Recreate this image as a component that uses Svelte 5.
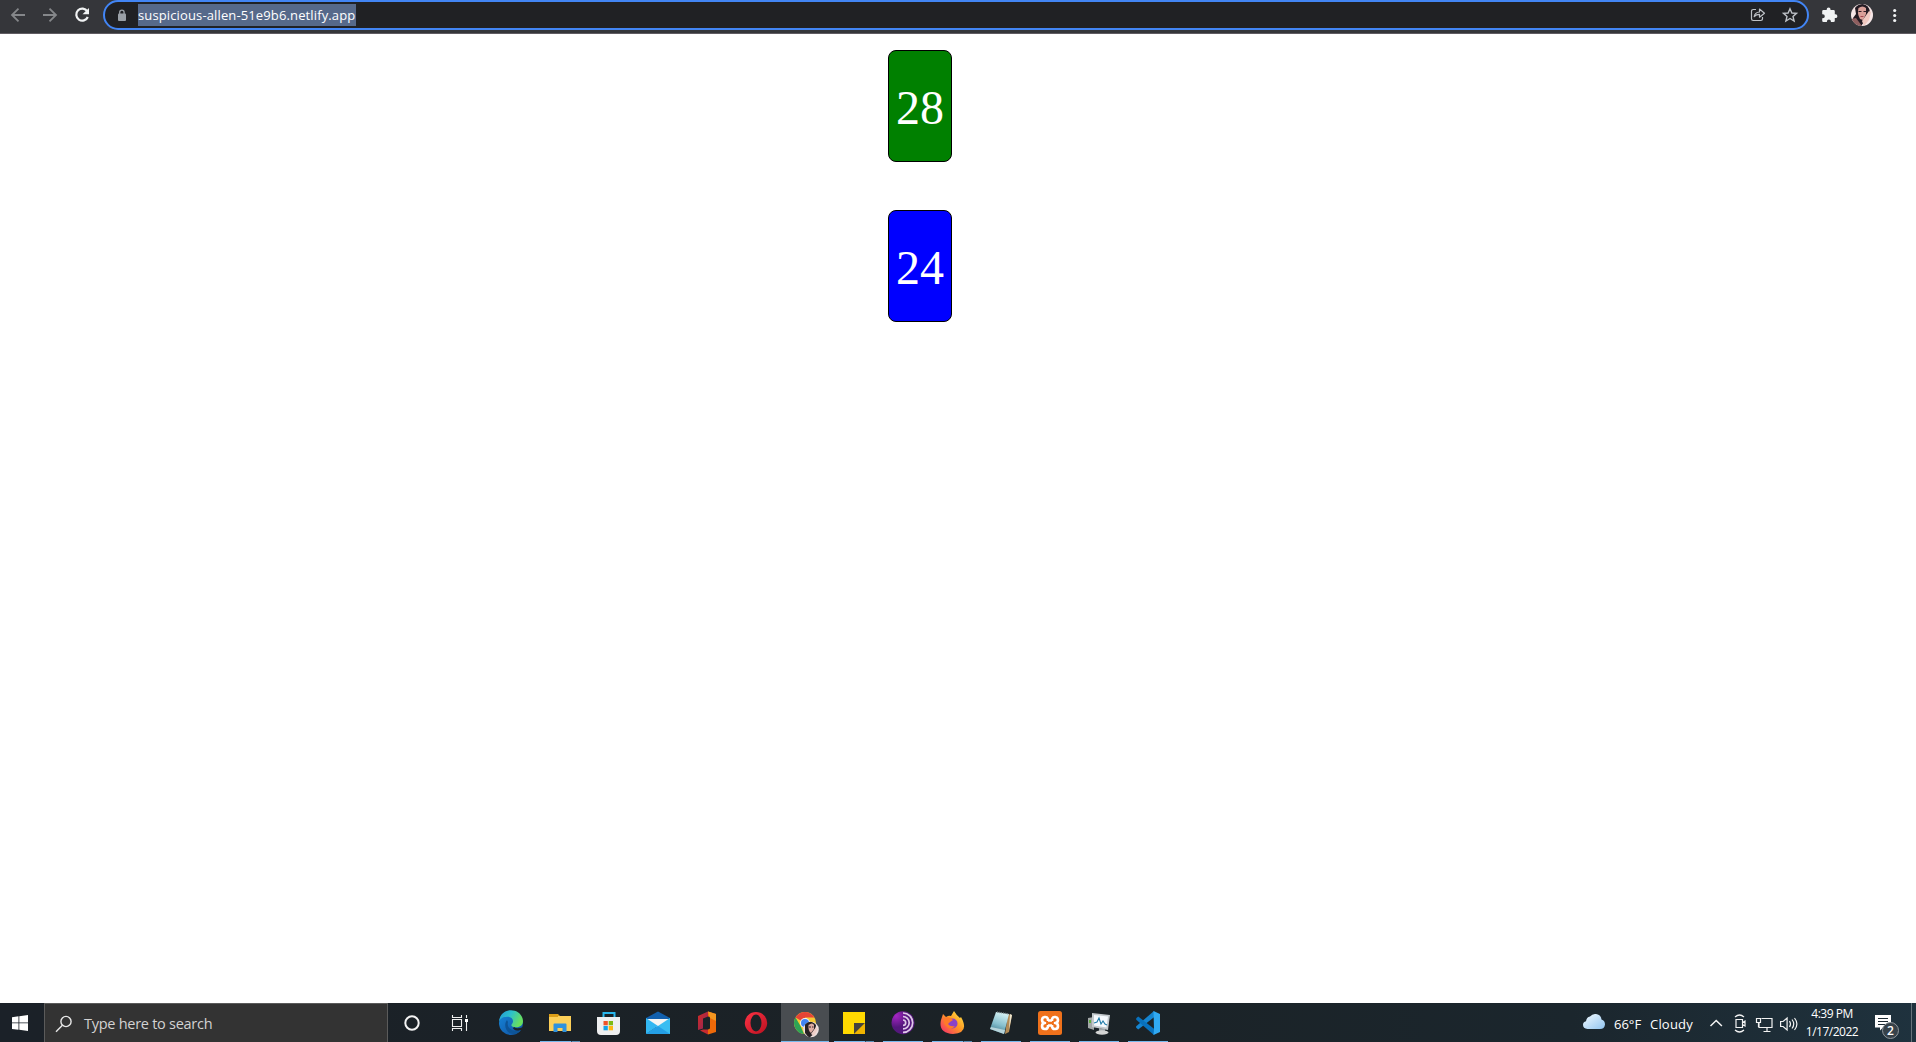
<script>
  const cards = [
    { value: 28, tone: 'green' },
    { value: 24, tone: 'blue' },
  ];
  const apps = [
    { name: 'edge' },
    { name: 'explorer', open: true, stacked: true },
    { name: 'store' },
    { name: 'mail' },
    { name: 'office' },
    { name: 'opera' },
    { name: 'chrome', open: true, active: true },
    { name: 'notes', open: true, stacked: true },
    { name: 'tor', open: true },
    { name: 'firefox', open: true, stacked: true },
    { name: 'notepad', open: true },
    { name: 'xampp', open: true },
    { name: 'monitor', open: true },
    { name: 'code', open: true },
  ];
</script>

<div class="screen">
  <header class="toolbar">
    <svg class="nav" width="103" height="33" viewBox="0 0 103 33" fill="none">
      <g stroke="#85878a" stroke-width="1.8">
        <path d="M25 15H12.5M18.5 8.6L12 15l6.500 6.400" />
        <path d="M43 15h12.500M49.500 8.600L56 15l-6.500 6.400" />
      </g>
      <path d="M87.300 11.300A6 6 0 1 0 87.800 17" stroke="#f1f3f4" stroke-width="2.200" />
      <path d="M89 8v6.300h-6.500z" fill="#f1f3f4" />
    </svg>
    <div class="omnibox">
      <svg class="lock" width="10" height="13" viewBox="0 0 10 13">
        <path d="M2.700 5V3.300a2.200 2.200 0 0 1 4.400 0V5" fill="none" stroke="#9aa0a6" stroke-width="1.300" />
        <rect x="1" y="4.500" width="8" height="7.500" rx="1" fill="#9aa0a6" />
      </svg>
      <span class="url">suspicious-allen-51e9b6.netlify.app</span>
      <svg class="page-actions" width="58" height="26" viewBox="0 0 58 26" fill="none" stroke="#bdc1c6" stroke-width="1.200">
        <path d="M8 7.500H5.200a1.700 1.700 0 0 0-1.700 1.700v7.600a1.700 1.700 0 0 0 1.700 1.700h7.600a1.700 1.700 0 0 0 1.700-1.700V15" />
        <path d="M6.200 14.500c.5-3 2.300-4.300 5.300-4.500V7l5 4.200-5 4v-2.800c-2.300 0-3.800.5-5.300 2.100z" stroke-linejoin="round" />
        <path d="M42 6.700l1.900 4.300 4.600.4-3.500 3 1.100 4.600-4.100-2.500-4.100 2.500 1.100-4.600-3.500-3 4.600-.4z" stroke-width="1.400" />
      </svg>
    </div>
    <svg class="extras" width="107" height="33" viewBox="0 0 107 33">
      <path
        d="M14.500 10h3.200V9.300a1.900 1.900 0 0 1 3.800 0V10h3a1.300 1.300 0 0 1 1.300 1.300v3h.7a1.900 1.900 0 0 1 0 3.800h-.7v2.700a1.300 1.300 0 0 1-1.300 1.300h-2.600v-.7a2 2 0 0 0-4 0v.7h-3.400a1.300 1.300 0 0 1-1.300-1.300v-2.600h.6a2 2 0 0 0 0-4h-.6v-2.900a1.300 1.300 0 0 1 1.300-1.300z"
        fill="#f1f3f4"
      />
      <clipPath id="face"><circle cx="53" cy="15" r="11" /></clipPath>
      <g clip-path="url(#face)">
        <path d="M42 4h22v22H42z" fill="#f6e6e6" />
        <path d="M46 8q3-4 8-4 6 1 7 8l-2 5-7 9q-8-2-8-8l3-4z" fill="#231a22" />
        <path d="M49.500 8q4-3 7.500 0v6l-3 6-3-1q-3-5-1.500-11z" fill="#d99f98" />
        <path d="M49.500 11.500h3M54.500 11.500h2.500" stroke="#302026" stroke-width="1.200" />
        <path d="M51.500 16.500h3" stroke="#a4454e" />
        <path d="M53 21l7-10 2 1-2 8-5 6z" fill="#f0c8c0" />
        <path d="M42 19l5-1 6 8h-9z" fill="#8f5f5f" />
      </g>
      <g fill="#f1f3f4"><circle cx="85.700" cy="10.500" r="1.600" /><circle cx="85.700" cy="15.500" r="1.600" /><circle cx="85.700" cy="20.500" r="1.600" /></g>
    </svg>
  </header>

  <main>
    {#each cards as card}
      <div class="card {card.tone}">{card.value}</div>
    {/each}
  </main>

  <footer class="taskbar">
    <svg class="start" width="44" height="39" viewBox="0 0 44 39" fill="#fff">
      <path d="M12 14.200l6.500-.9v6.200H12zM19.300 13.200L28 12v7.500h-8.700zM12 20.300h6.500v6.500l-6.500-.9zM19.300 20.300H28V28l-8.700-1.200z" />
    </svg>
    <div class="search">
      <svg width="18" height="18" viewBox="0 0 18 18" fill="none" stroke="#e8e8e8" stroke-width="1.400">
        <circle cx="11" cy="6.500" r="5.100" /><path d="M7.400 10.300L1 16.700" />
      </svg>
      <span>Type here to search</span>
    </div>
    <svg class="task" width="48" height="39" viewBox="0 0 48 39" fill="none"><circle cx="24" cy="20" r="6.700" stroke="#f4f4f4" stroke-width="2" /></svg>
    <svg class="task" width="48" height="39" viewBox="0 0 48 39" fill="none" stroke="#eee" stroke-width="1.100">
      <path d="M16.500 16.500h9v7h-9zM16.500 12v2.500h9V12M16.500 28v-2.500h9V28M30.500 12v3M30.500 19v9" />
      <path d="M29 16h3v3h-3z" fill="#fff" stroke="none" />
    </svg>

    <div class="apps">
      {#each apps as app}
        <div class="app" class:open={app.open} class:active={app.active} class:stacked={app.stacked}>
          <svg width="48" height="39" viewBox="0 0 48 39">
            {#if app.name === 'edge'}
              <linearGradient id="edgeTop" x1="0" x2="1" y2=".4"><stop stop-color="#2396d8" /><stop offset=".5" stop-color="#2cc0cb" /><stop offset="1" stop-color="#68df5d" /></linearGradient>
              <linearGradient id="edgeBase" x2="1" y2="1"><stop stop-color="#1688dc" /><stop offset="1" stop-color="#104e9d" /></linearGradient>
              <circle cx="24" cy="20" r="12" fill="url(#edgeBase)" />
              <path d="M12 19C13 3 35 4 36 18c0 5-4 7-9 6-3-.5-3-2-2-3 3-4-1-8-6-7-4 0-6 2-7 5z" fill="url(#edgeTop)" />
              <path d="M27 24q3 2.500 9 0l.5 1.500-2 1.700q-6 1.500-8.500-1.700z" fill="#1b242a" />
              <path d="M20 17c-4 5-1 14 7 14 3 0 6-2 7-4-6 3-15-1-13-8z" fill="#0d5497" />
            {:else if app.name === 'explorer'}
              <path d="M13 11h9l2 2h-11z" fill="#d89a13" /><path d="M13 13h22v15H13z" fill="#fccf58" />
              <path d="M13 11h9v3h-9z" fill="#dc9e18" /><path d="M17.500 29v-7.500q0-1 1-1h11q1 0 1 1V29h-4v-4h-5v4z" fill="#2f92dd" />
            {:else if app.name === 'store'}
              <path d="M18.500 15V10h11v5" fill="none" stroke="#29b7ed" stroke-width="2" />
              <path d="M12 14h23v14q0 4-4 4H16q-4 0-4-4z" fill="#eeeff0" />
              <path d="M18.500 18h4.300v4.300h-4.300z" fill="#ef5329" /><path d="M23.700 18H28v4.300h-4.300z" fill="#7dba14" /><path d="M18.500 23h4.300v4.300h-4.300z" fill="#12a2e8" /><path d="M23.700 23H28v4.300h-4.300z" fill="#fdb714" />
            {:else if app.name === 'mail'}
              <path d="M12 15l12-6.500L36 15v7H12z" fill="#1260ad" /><path d="M13 16h22v8H13z" fill="#f5f5f4" />
              <path d="M12 15l12 8-12 8z" fill="#32b7f2" /><path d="M36 15v16H12l12-8z" fill="#39bdf2" /><path d="M24 23l12 8H12z" fill="#249fe6" />
            {:else if app.name === 'office'}
              <linearGradient id="officeRed" y2="1"><stop stop-color="#d22b22" /><stop offset="1" stop-color="#8d245e" /></linearGradient>
              <path d="M15 13l10-4.500v5l-5 2v10l-5 1.500z" fill="url(#officeRed)" />
              <path d="M25 8.500l8 2.500v18l-8 2.500v-5l2-1V14l-2-.5z" fill="#ee6909" /><path d="M25 26.500v5l-8-4 3-1z" fill="#c72b30" /><path d="M25 8.500l8 2.500v7l-6-3z" fill="#f49620" />
            {:else if app.name === 'opera'}
              <linearGradient id="operaRed" x2="1" y2="1"><stop stop-color="#ff3345" /><stop offset="1" stop-color="#b8101f" /></linearGradient>
              <path d="M24 9a11.200 11 0 1 0 0 22 11.200 11 0 1 0 0-22zm0 2.500a5.500 8.500 0 1 1 0 17 5.500 8.500 0 1 1 0-17z" fill="url(#operaRed)" />
            {:else if app.name === 'chrome'}
              <circle cx="24" cy="20" r="11" fill="#f6c934" /><path d="M24 20L14.500 14.500A11 11 0 0 1 33.500 14.500H24z" fill="#e54436" />
              <path d="M14.500 14.500L19.500 23l3.500 8A11 11 0 0 1 14.500 14.500z" fill="#2da455" /><circle cx="24" cy="20" r="5" fill="#f7f7f7" /><circle cx="24" cy="20" r="4" fill="#4285f4" />
              <clipPath id="miniFace"><circle cx="30" cy="26.500" r="7.800" /></clipPath>
              <g clip-path="url(#miniFace)"><path d="M22 18h16v17H22z" fill="#eee0df" /><path d="M24 20q6-4 11 2l-1 8-6 5-4-5z" fill="#282124" /><path d="M27.500 22q4-3 5.500 0v4l-3 4q-3-2-2.500-8z" fill="#dfaca3" /><path d="M28 24h2M31 24h1.500" stroke="#3a2527" /><path d="M30 31l5-7 2 2-4 7z" fill="#f0cfc9" /></g>
            {:else if app.name === 'notes'}
              <path d="M13 9h22v11L24 31H13z" fill="#ffd900" /><path d="M24 31V20h11z" fill="#45433d" /><path d="M35 20v11H24z" fill="#efb300" />
            {:else if app.name === 'tor'}
              <radialGradient id="torBody" cx=".2" cy=".2"><stop stop-color="#a525c3" /><stop offset="1" stop-color="#55177d" /></radialGradient>
              <circle cx="24" cy="19.700" r="11.500" fill="url(#torBody)" />
              <g fill="none" stroke="#dfc9e8" stroke-width="1.700"><path d="M24 10a9.700 9.700 0 0 1 0 19.400M24 13.500a6.200 6.200 0 0 1 0 12.400M24 17a2.700 2.700 0 0 1 0 5.400" /></g>
            {:else if app.name === 'firefox'}
              <linearGradient id="foxFire" x1="1" x2="0" y2="1"><stop stop-color="#fff14b" /><stop offset=".45" stop-color="#ff9b24" /><stop offset="1" stop-color="#f4236f" /></linearGradient>
              <path d="M15 11l3 3q3-2 5-1l3-5q3 5 6 7l1-1q9 16-8 17-15-1-12-14z" fill="url(#foxFire)" />
              <circle cx="24.500" cy="20.500" r="5" fill="#8a42c9" /><path d="M16 15q6-2 9 2l-3 2-2 2q2 3 7 2-4 5-9 0-3-3-2-8z" fill="#ff7a28" />
            {:else if app.name === 'notepad'}
              <linearGradient id="padPaper" x1=".6" x2=".3" y2="1"><stop stop-color="#d7f2f4" /><stop offset=".55" stop-color="#86bfce" /><stop offset="1" stop-color="#367184" /></linearGradient>
              <path d="M31 11l4 1-3 17-4 2z" fill="#b28a55" /><path d="M33 11l2 1-3 15z" fill="#eee6ce" />
              <path d="M19 9l13 2-5 20-14-5z" fill="url(#padPaper)" /><path d="M14 24l14 3-1 4-14-5z" fill="#b6d3da" /><path d="M20 9l12 2" stroke="#757e80" stroke-width="1.300" stroke-dasharray="1 1" />
            {:else if app.name === 'xampp'}
              <rect x="12" y="8" width="24" height="24" rx="2.500" fill="#ef711b" />
              <path d="M22 17.500h4M22 22.500h4M22 18v-1.500a3 3 0 1 0-3 3.500 3 3 0 1 0 3 3.500V22M26 18v-1.500a3 3 0 1 1 3 3.500 3 3 0 1 1-3 3.500V22" fill="none" stroke="#fff" stroke-width="2.600" stroke-linejoin="round" />
            {:else if app.name === 'monitor'}
              <path d="M13 15l6-1v13l-6-2z" fill="#a3a8a8" /><path d="M14 17h2v3h-2z" fill="#5fae3d" />
              <path d="M17 10l18 2-2 15-16-3z" fill="#c3c9cd" /><path d="M19 12l14 1.500-1.500 11-12.500-2z" fill="#f5fafe" />
              <path d="M19 20l3-1 2-4 2 6 2-3 2 3 2 1" fill="none" stroke="#207ca9" stroke-width="1.100" /><path d="M24 25l6 1v3h-6z" fill="#9fa6aa" /><ellipse cx="27" cy="29.500" rx="6.500" ry="2.200" fill="#d3d4d4" />
            {:else}
              <path d="M30 8l-17.500 15q-1 1 0 2l1.700 1.500L31 13.500z" fill="#1584cf" /><path d="M30 32L12.500 17q-1-1 0-2l1.700-1.500L31 26.500z" fill="#0871bd" /><path d="M29.500 8L36 11v18l-6.500 3L30 26z" fill="#30a9f2" />
            {/if}
          </svg>
        </div>
      {/each}
    </div>

    <div class="weather">
      <svg width="22" height="17" viewBox="0 0 22 17">
        <linearGradient id="cloud" y2="1"><stop stop-color="#f3fbff" /><stop offset="1" stop-color="#91c4f0" /></linearGradient>
        <path d="M4.500 16Q0 15.500 0 11.800 0 9 3 8.300q.5-4 4-4.800Q9.500.4 13 1q5 .8 5.500 5.500Q22 7.500 22 11.500 21.500 16 17 16z" fill="url(#cloud)" />
      </svg>
      <span class="temp">66°F</span><span class="sky">Cloudy</span>
    </div>
    <svg class="tray" width="104" height="39" viewBox="0 0 104 39" fill="none" stroke="#f3f3f3" stroke-width="1.200">
      <path d="M9.500 23l5.700-5.500 5.700 5.500" stroke-width="1.500" />
      <path d="M35 16.500h6.500v8H35zM41.500 19.500l2.500-1.500v5l-2.500-1.500M34 14q4.500-4 9 0M34 27q4.500 4 9 0" />
      <path d="M60.500 15.500h10.500v9H58V20M62.500 28.500h7M66 24.500v4M55.500 15.500h4v4h-4zM57.500 19.500V24" />
      <path d="M79.600 18.500h2.500l4-3.500v12l-4-3.500h-2.500zM88.500 18q2 3 0 6M91 16.500q3.500 4.500 0 9M93.500 15q4.800 6 0 12" />
    </svg>
    <div class="clock"><span class="time">4:39 PM</span><span class="date">1/17/2022</span></div>
    <div class="notices">
      <svg width="17" height="16" viewBox="0 0 17 16"><path d="M0 0h16v12.500H8L5 15.500v-3H0z" fill="#fff" /><path d="M3 3.500h10M3 6.500h10M3 9.500h7" stroke="#1d2b34" stroke-width="1.200" /></svg>
      <span class="badge">2</span>
    </div>
    <div class="desktop-edge"></div>
  </footer>
</div>

<style>
  :global(body) { margin: 0; }
  .screen { width: 1916px; height: 1042px; display: flex; flex-direction: column; background: #fff; overflow: hidden; }
  .screen * { box-sizing: border-box; }
  svg { display: block; flex: none; }

  .toolbar { height: 34px; flex: none; display: flex; background: #35363a; border-bottom: 1px solid #605c62; }
  .omnibox { width: 1706px; height: 30px; display: flex; align-items: center; border: 2px solid #4285f4; border-radius: 15px; background: #202124; padding: 0 1px 0 10px; }
  .url { height: 22px; margin-left: 11px; width: 218px; background: #56698a; color: #fff; font: 13px/22px "Open Sans", "Noto Sans", sans-serif; letter-spacing: 0.13px; white-space: nowrap; }
  .page-actions { margin-left: auto; }
  .lock { margin-left: 2px; }

  main { flex: 1; display: flex; flex-direction: column; gap: 48px; padding: 16px 0 0 888px; }
  .card { width: 64px; height: 112px; display: flex; align-items: center; justify-content: center; padding-top: 3px; border: 1px solid #000; border-radius: 8px; color: #fff; font: 48px/54px "Liberation Serif", serif; }
  .green { background: #008000; }
  .blue { background: #0000ff; }

  .taskbar { height: 39px; flex: none; display: flex; background: linear-gradient(90deg, #1b2128, #1b2226 55%, #1b262d 82%, #1f323e); color: #fff; font-family: "Open Sans", "Noto Sans", sans-serif; }
  .search { width: 344px; height: 39px; display: flex; align-items: center; padding: 1px 0 0 10px; gap: 11px; background: #333; border: 1px solid #5b5b5b; border-bottom: 0; color: #d2d2d2; font-size: 14.5px; white-space: nowrap; }
  .search span { letter-spacing: -0.27px; }
  .apps { display: flex; gap: 1px; padding-left: 3px; }
  .app { width: 48px; height: 39px; display: flex; flex-direction: column; }
  .app svg { margin-bottom: -1px; }
  .open::after { content: ""; width: 40px; height: 1px; margin-left: 4px; background: #76b9ed; position: relative; }
  .stacked::after { background: linear-gradient(90deg, #76b9ed 31px, #345168 31px, #345168 32px, #5b90b8 32px); }
  .active { background: #494d51; }
  .active::after { width: 48px; margin-left: 0; }

  .weather { display: flex; align-items: center; margin-left: auto; font-size: 13px; white-space: nowrap; padding-top: 2px; }
  .weather svg { margin-top: -4px; }
  .temp { width: 27px; margin-left: 9px; }
  .sky { width: 43px; margin-left: 9px; letter-spacing: 0.2px; }
  .tray { margin-left: 8px; }
  .clock { width: 65px; display: flex; flex-direction: column; align-items: center; padding: 2px 11px 0 0; font-size: 12px; line-height: 18px; white-space: nowrap; letter-spacing: -0.5px; }
  .notices { width: 37px; height: 39px; position: relative; padding: 12px 0 0 5px; }
  .badge { position: absolute; left: 12px; top: 19px; width: 17px; height: 17px; border-radius: 50%; border: 1px solid #90979c; background: #37424a; text-align: center; font-size: 12px; font-weight: 600; line-height: 15px; }
  .desktop-edge { width: 5px; border-left: 1px solid #66737b; margin-left: 4px; }
</style>
